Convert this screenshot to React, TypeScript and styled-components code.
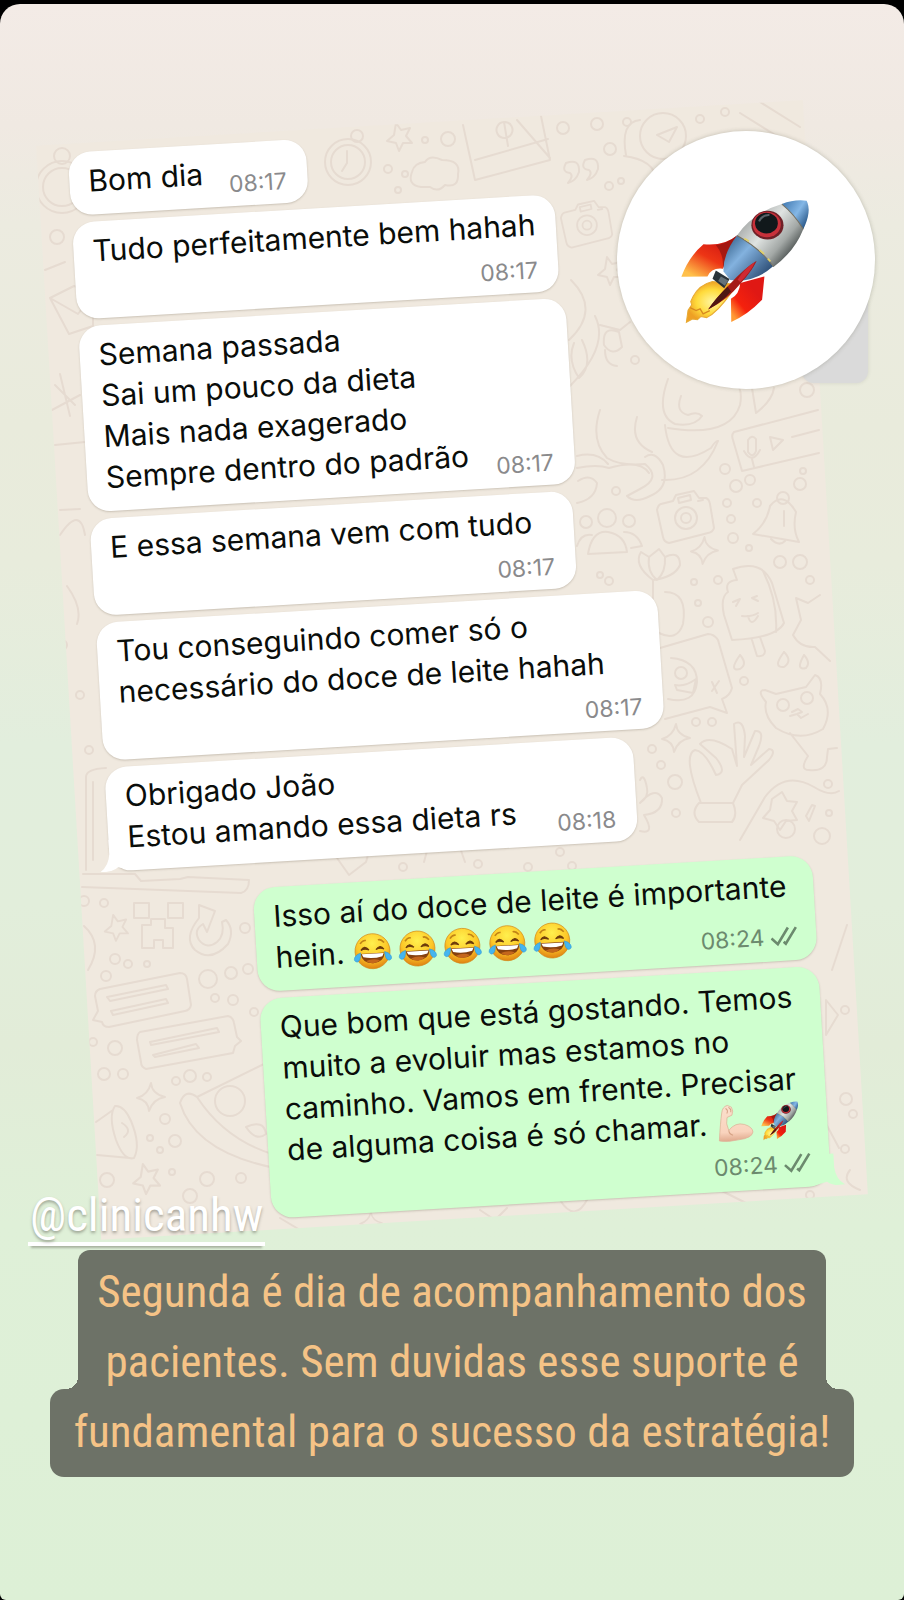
import React from "react";
import styled, { createGlobalStyle } from "styled-components";

const GlobalStyle = createGlobalStyle`
  *, *::before, *::after { box-sizing: border-box; }
  body { margin: 0; background: #000; }
`;

const Story = styled.main`
  position: relative;
  display: flex;
  flex-direction: column;
  align-items: center;
  min-height: calc(100vh - 4px);
  margin-top: 4px;
  padding: 118px 0 120px;
  overflow: hidden;
  border-radius: 20px 20px 6px 6px;
  background: linear-gradient(
    #f3ebe6 0px, #f0e9e2 120px, #ecebe0 220px, #e9ebdc 420px,
    #e8ecdc 560px, #e2eedd 740px, #e2eedb 900px, #e2ecd8 1040px,
    #dff0d8 1220px, #ddf0d6 1600px
  );
`;

const Chat = styled.section`
  position: relative;
  width: 85%;
  max-width: 768px;
  padding: 9px 36px 11px 31px;
  transform: rotate(-3.4deg);
  background: #f0e9df;
  overflow: hidden;
`;

const Wallpaper = styled.svg`
  position: absolute;
  inset: 0;
  width: 100%;
  height: 100%;
  fill: none;
  stroke: #e6dbd1;
  stroke-width: 2;
  stroke-linecap: round;
  stroke-linejoin: round;
`;

const Messages = styled.ol`
  position: relative;
  display: flex;
  flex-direction: column;
  gap: 7px;
  margin: 0;
  padding: 0;
  list-style: none;
`;

const Bubble = styled.li<{ $sent?: boolean; $width: number; $stacked?: boolean; $first?: boolean }>`
  position: relative;
  display: grid;
  width: ${(p) => p.$width}px;
  max-width: 100%;
  align-self: ${(p) => (p.$sent ? "flex-end" : "flex-start")};
  margin-top: ${(p) => (p.$first ? 18 : 0)}px;
  padding: 9px 20px 13px 19px;
  padding-right: ${(p) => (p.$sent ? 18 : 21)}px;
  border-radius: 22px;
  background: ${(p) => (p.$sent ? "#cfffcf" : "#fff")};
  box-shadow: 0 1px 2px rgba(90, 80, 60, 0.25);

  > p { padding-bottom: ${(p) => (p.$stacked ? 34 : 0)}px; }
  > p, > div { grid-area: 1 / 1; }
`;

const Text = styled.p`
  position: relative;
  margin: 0;
  color: #0a0d0a;
  font: 400 30px/41px Inter, "Liberation Sans", sans-serif;
  white-space: nowrap;
`;

const Meta = styled.div<{ $sent?: boolean }>`
  position: relative;
  display: flex;
  align-items: center;
  gap: 6px;
  align-self: end;
  justify-self: end;
  color: ${(p) => (p.$sent ? "#6c8a6e" : "#8a8a8c")};
  font: 400 23px/18px Inter, "Liberation Sans", sans-serif;
`;

const Tail = styled.svg<{ $sent?: boolean }>`
  position: absolute;
  bottom: 0;
  ${(p) => (p.$sent ? "right: -14px; transform: scaleX(-1);" : "left: -10px;")}
  width: 34px;
  height: 32px;
  fill: ${(p) => (p.$sent ? "#cfffcf" : "#fff")};
`;

const Emoji = styled.svg`
  display: inline-block;
  width: 40px;
  height: 40px;
  margin-right: 5px;
  vertical-align: -9px;
`;

const Avatar = styled.figure`
  position: absolute;
  top: 127px;
  right: 29px;
  display: grid;
  place-items: center;
  width: 258px;
  height: 258px;
  margin: 0;
  isolation: isolate;

  &::before {
    content: "";
    position: absolute;
    z-index: -2;
    right: 7px;
    bottom: 6px;
    width: 66px;
    height: 90px;
    border-radius: 12px;
    background: #dadada;
    box-shadow: 0 0 4px rgba(0, 0, 0, 0.1);
  }

  &::after {
    content: "";
    position: absolute;
    z-index: -1;
    inset: 0;
    border-radius: 50%;
    background: #fff;
    box-shadow: 0 0 4px rgba(80, 80, 60, 0.3);
  }
`;

const BigRocket = styled.svg`
  width: 134px;
  height: 129px;
`;

const Handle = styled.a`
  position: absolute;
  top: 1183px;
  left: 28px;
  padding: 0 2px;
  border-bottom: 4px solid #fff;
  color: #fff;
  font: 400 47px/55px "Roboto Condensed", "Liberation Sans Narrow", "Roboto", sans-serif;
  text-decoration: none;
  text-shadow: 0 2px 3px rgba(90, 90, 80, 0.5);
  box-shadow: 0 5px 2px -3px rgba(90, 90, 80, 0.4);
`;

const Caption = styled.p`
  display: flex;
  flex-direction: column;
  align-items: center;
  width: 89%;
  margin: 32px 0 0;
  color: #f5c386;
  font: 400 45px/70px "Roboto Condensed", "Liberation Sans Narrow", "Roboto", sans-serif;
  text-align: center;
`;

const CaptionTop = styled.span`
  position: relative;
  width: 93%;
  padding-top: 7px;
  border-radius: 12px 12px 0 0;
  background: #6d7267;
`;

const CaptionBottom = styled.span`
  width: 100%;
  margin-top: -8px;
  padding: 8px 0 10px;
  border-radius: 14px;
  background: #6d7267;
`;

const Line = styled.span`
  display: block;
  white-space: nowrap;
`;

const Fillet = styled.i<{ $side: "left" | "right" }>`
  position: absolute;
  bottom: 8px;
  ${(p) => p.$side}: -12px;
  width: 12px;
  height: 12px;
  background: radial-gradient(circle at ${(p) => (p.$side === "left" ? "0 0" : "100% 0")}, transparent 12px, #6d7267 12px);
`;

function Defs() {
  return (
    <svg width="0" height="0" style={{ position: "absolute" }} aria-hidden="true">
      <defs>
        <linearGradient id="body" x1="430" y1="340" x2="560" y2="450" gradientUnits="userSpaceOnUse">
          <stop offset="0" stopColor="#a8abaa" /><stop offset=".4" stopColor="#dfe3e1" /><stop offset=".75" stopColor="#a3a8a6" /><stop offset="1" stopColor="#4d5352" />
        </linearGradient>
        <linearGradient id="blue" x1="380" y1="410" x2="490" y2="510" gradientUnits="userSpaceOnUse">
          <stop offset="0" stopColor="#46729c" /><stop offset=".35" stopColor="#83b2df" /><stop offset="1" stopColor="#2b4c74" />
        </linearGradient>
        <linearGradient id="nose" x1="550" y1="290" x2="625" y2="340" gradientUnits="userSpaceOnUse">
          <stop offset="0" stopColor="#4c83b9" /><stop offset=".5" stopColor="#84b7e6" /><stop offset="1" stopColor="#255384" />
        </linearGradient>
        <linearGradient id="fin" x1="350" y1="400" x2="290" y2="510" gradientUnits="userSpaceOnUse">
          <stop offset="0" stopColor="#d51b12" /><stop offset=".45" stopColor="#ed3515" /><stop offset="1" stopColor="#ffc04a" />
        </linearGradient>
        <linearGradient id="fin2" x1="470" y1="560" x2="395" y2="620" gradientUnits="userSpaceOnUse">
          <stop offset="0" stopColor="#e01814" /><stop offset=".6" stopColor="#f5210d" /><stop offset="1" stopColor="#ff9b35" />
        </linearGradient>
        <radialGradient id="flame"><stop offset="0" stopColor="#fff6a0" /><stop offset=".6" stopColor="#ffdb3c" /><stop offset="1" stopColor="#eea024" /></radialGradient>
        <radialGradient id="face" cx=".5" cy=".28" r=".75"><stop offset="0" stopColor="#fff04e" /><stop offset=".6" stopColor="#fdc727" /><stop offset="1" stopColor="#dc7a11" /></radialGradient>
        <linearGradient id="skin" x1="0" y1="0" x2="0" y2="1"><stop offset="0" stopColor="#fbe0cd" /><stop offset=".75" stopColor="#f9d3bd" /><stop offset="1" stopColor="#e0a98d" /></linearGradient>

        <symbol id="rocket" viewBox="235 265 400 385">
          <path d="M335 520 Q295 530 277 565 L270 580 273 590 262 606 257 642 L275 632 290 634 300 625 318 628 Q350 612 390 555 L410 530Z" fill="url(#flame)" stroke="#e8aa34" strokeWidth="3" />
          <path d="M268 598l18 9 12-5 9 15 20-10" fill="none" stroke="#d88920" strokeWidth="4" />
          <path d="M408 383 Q370 415 308 409 Q265 445 242 506 L320 505 Q332 478 366 482Z" fill="url(#fin)" />
          <path d="M408 383 Q375 410 345 411 Q370 440 366 482 L385 430Z" fill="#8e1410" opacity=".7" />
          <path d="M490 505 L483 575 Q440 620 391 641 L390 572 Q415 560 418 525Z" fill="url(#fin2)" />
          <path d="M408 383 Q365 440 368 490 L388 516 Q460 525 516 475 Q475 415 408 383Z" fill="url(#blue)" />
          <path d="M408 383 Q455 315 542 289 Q585 315 606 364 Q580 430 518 476 Q475 420 408 383Z" fill="url(#body)" />
          <path d="M542 289 Q580 274 616 279 Q632 310 606 364 Q580 320 542 289Z" fill="url(#nose)" />
          <path d="M408 383Q475 420 518 476M542 289Q580 320 606 364" fill="none" stroke="#746f60" strokeWidth="3" />
          <path d="M430 392l14 8M475 426l14 12M500 452l8 8" stroke="#e3d267" strokeWidth="5" />
          <ellipse cx="499" cy="352" rx="48" ry="43" fill="#6f2027" />
          <ellipse cx="497" cy="350" rx="42" ry="38" fill="#c8313b" />
          <ellipse cx="496" cy="346" rx="34" ry="31" fill="#11181b" />
          <path d="M474 341Q482 321 505 322" fill="none" stroke="#586269" strokeWidth="6" />
          <path d="M345 487 L386 513 L370 540 L335 512Z" fill="#29333a" /><path d="M360 505l22 12-10 16-20-14Z" fill="#65727a" />
          <path d="M467 458 Q430 480 385 530 Q345 570 322 604 Q380 575 420 525 Q455 485 467 458Z" fill="#a51a17" />
          <path d="M462 462Q430 480 410 515L418 522Q450 490 462 462Z" fill="#d02a32" />
          <path d="M380 535Q340 575 322 604Q365 580 390 550Z" fill="#4e1713" />
        </symbol>

        <symbol id="joy" viewBox="0 0 40 40">
          <circle cx="20" cy="20" r="17.5" fill="url(#face)" stroke="#d28a1b" strokeWidth=".7" />
          <path d="M8 22h24Q31 31.500 20 32Q9 31.500 8 22Z" fill="#85400f" />
          <path d="M9 22.500h22l-1.500 3Q20 28 10.500 25.500Z" fill="#fff" />
          <path d="M13 29.500Q20 26.500 27 29.500Q24 32 20 32Q15 32 13 29.500Z" fill="#c4661c" />
          <path d="M8.500 18.500Q12 13 16.500 18.500Q12 16.500 8.500 18.500ZM23.500 18.500Q28 13 31.500 18.500Q28 16.500 23.500 18.500Z" fill="#6d3b0b" stroke="#6d3b0b" strokeWidth="1.200" />
          <path d="M8 12Q11 8 14 9M26 9Q29 8 32 12" fill="none" stroke="#c08316" strokeWidth="1.600" />
          <path d="M8 21Q8 29 4 30Q0 29 2 25Q4 22 8 21ZM32 21Q32 29 36 30Q40 29 38 25Q36 22 32 21Z" fill="#45b5ef" stroke="#2c93d6" strokeWidth=".5" />
        </symbol>

        <symbol id="arm" viewBox="0 0 40 40">
          <path d="M3 37Q5 19 7 9Q8 3 13 2L17 4Q19 8 17 12L12 14Q10 20 13 27Q20 19 29 22Q37 25 37 30Q36 36 22 37Q12 39 3 37Z" fill="url(#skin)" stroke="#dfb49b" strokeWidth=".8" />
          <path d="M11 5q3 2 1 5M14 4q3 2 2 5M13 27q0 4 4 5" fill="none" stroke="#d5a184" strokeWidth="1" />
        </symbol>

        <symbol id="star" viewBox="-14 -14 28 28" overflow="visible"><path d="M-2-12l5 7 9-2-4 8 6 7-9 0-4 8-3-8-9-2 7-6Z" /></symbol>
        <symbol id="spark" viewBox="-14 -14 28 28" overflow="visible"><path d="M0-14Q1-3 14 0Q2 2-2 14Q-3 3-14 1Q-3-2 0-14Z" /></symbol>
        <symbol id="camera" viewBox="0 0 60 60" overflow="visible"><path d="M5 14L17 11 20 5 38 1 43 8 50 8Q53 9 54 14L58 38Q57 42 52 43L13 53Q8 52 7 47L1 20Q2 15 5 14Z" /><circle cx="30" cy="28" r="11" /><circle cx="30" cy="28" r="5" /><path d="M22 8l12-3 1 5-12 3ZM42 11l5-1" /></symbol>
        <symbol id="note" viewBox="0 0 100 60" overflow="visible"><path d="M8 16L88 0Q94 0 95 6L99 32Q98 37 93 38L17 54Q11 54 10 49L1 47 6 38 3 23Q3 18 8 16ZM15 24L74 12 76 16 18 28ZM19 38L74 26 76 30 21 42Z" /></symbol>
      </defs>
    </svg>
  );
}

const dots: [number, number, number][] = [
  [563, 128, 6], [597, 124, 6], [610, 149, 6], [627, 122, 4], [700, 119, 4], [725, 112, 4], [448, 139, 7], [425, 140, 3], [398, 190, 3], [405, 174, 3], [388, 169, 4],
  [609, 186, 4], [621, 181, 3], [750, 480, 5], [757, 503, 4], [725, 469, 5], [736, 486, 6], [800, 484, 6], [803, 471, 3], [727, 503, 4], [731, 519, 4], [733, 538, 5], [749, 548, 3],
  [616, 491, 4], [600, 575, 3], [609, 581, 4], [780, 562, 6], [800, 562, 7], [810, 580, 4], [718, 580, 4], [694, 582, 3], [698, 603, 3], [708, 622, 5], [744, 681, 4], [696, 722, 4], [712, 722, 4],
  [652, 749, 4], [661, 765, 4], [675, 782, 7], [676, 813, 4], [828, 784, 4], [786, 829, 9], [822, 836, 8], [829, 813, 3],
  [104, 903, 4], [84, 901, 5], [115, 959, 5], [128, 964, 4], [147, 964, 3], [106, 976, 5], [208, 979, 9], [231, 973, 6], [248, 969, 5], [245, 928, 5], [215, 998, 4], [233, 1000, 5], [254, 1012, 4],
  [93, 1042, 4], [115, 1048, 7], [104, 1074, 6], [123, 1074, 5], [190, 1076, 6], [176, 1081, 4], [207, 1077, 4], [165, 1119, 5], [175, 1141, 6], [150, 1138, 3], [160, 1150, 3],
  [107, 1180, 7], [207, 1179, 7], [172, 1172, 3], [241, 1178, 5], [190, 1196, 7], [846, 1099, 6], [853, 1114, 4], [845, 1149, 4], [810, 1195, 4], [845, 1010, 4], [57, 237, 7], [62, 645, 5], [89, 750, 4], [80, 695, 4],
  [403, 867, 4], [478, 864, 4], [560, 852, 4], [572, 866, 4], [528, 867, 4], [807, 390, 7], [635, 360, 4],
];

function Doodles() {
  return (
    <Wallpaper viewBox="0 0 776 1096" preserveAspectRatio="xMidYMin slice" aria-hidden="true">
      <g transform="translate(388 548) rotate(3.4) translate(-452 -670)">
        {dots.map(([x, y, r]) => <circle key={`${x}-${y}`} cx={x} cy={y} r={r} />)}
        <use href="#star" x="384" y="121" width="28" height="28" />
        <use href="#star" x="102" y="913" width="26" height="26" />
        <use href="#star" x="130" y="1162" width="30" height="30" />
        <use href="#star" x="595" y="255" width="28" height="28" />
        <use href="#spark" x="691" y="537" width="27" height="27" />
        <use href="#spark" x="662" y="724" width="28" height="28" />
        <use href="#spark" x="137" y="1083" width="28" height="28" />
        <use href="#spark" x="360" y="1212" width="22" height="22" />
        <use href="#camera" x="656" y="490" width="60" height="60" />
        <use href="#camera" x="560" y="200" width="54" height="54" />
        <use href="#note" x="92" y="973" width="100" height="60" />
        <path d="M140 1032L228 1016Q233 1017 234 1023L237 1037 241 1041 235 1046 233 1053 146 1069Q141 1067 141 1062L137 1040Q137 1034 140 1032ZM150 1042L217 1028 219 1032 151 1045ZM153 1055L196 1044 199 1048 155 1057Z" />
        <circle cx="348" cy="162" r="23" /><circle cx="348" cy="162" r="17" /><circle cx="357" cy="136" r="6" /><path d="M347 151v12l-5 8" />
        <circle cx="62" cy="187" r="26" /><circle cx="62" cy="187" r="19" /><circle cx="62" cy="156" r="8" />
        <path d="M421 187Q407 185 412 172Q414 163 425 162Q430 154 442 160Q461 160 458 174Q459 188 445 185Q438 193 430 187Z" />
        <path d="M463 125L475 180 550 160 541 116M475 160L548 139M517 120L550 158M505 122a8 8 0 1 1-1 0l4 24" />
        <path d="M566 163q14-5 13 9q-3 9-11 11q6-7 2-10q-9-1-4-10M585 160q14-5 13 9q-3 9-11 11q6-7 2-10q-9-1-4-10" />
        <circle cx="663" cy="136" r="23" /><path d="M626 155Q620 122 640 120M624 156Q655 160 656 180M657 135l20-8-8 15ZM740 113l40 25M760 102l40 25" />
        <path d="M50 298l24-12 19 6v34l-24 8ZM50 298l28 16 15-20M45 270l20-8M55 385l20 20M52 410l28-15M60 374l10 42M55 445l30-3M60 510l20-1M60 535q20-30 25 0M67 586q16 22 10 38" />
        <path d="M571 280q30 30-2 60M570 386q40-40 25-70M582 340q12 25-3 38q-12-18-5-35M600 410Q590 440 607 458Q620 466 645 464Q662 478 640 489L627 496Q635 504 650 496Q670 488 663 465Q655 450 645 457M577 456q20-5 31 8M577 468q20-4 32 0Q640 459 649 473M578 481q12-8 19 2q-1 16-20 20M637 417q-8 25 15 35M665 425Q670 474 711 448Q716 440 718 441Q702 482 662 480M668 379Q655 415 675 424Q695 427 702 416Q697 411 688 415Q675 412 681 396M668 428Q730 438 740 405Q746 375 711 374M752 388l4 25q16-12 18-25M600 325l20 5 10-8M604 345q-2-20 15-13l3 15q-10 10-18-2M605 350q0 15 12 16" />
        <path d="M818 410L734 432Q731 435 733 440L742 471 819 453M748 440v12q5 7 8-1v-12q-4-5-8 1M744 451q8 14 16-1M752 459l2 8M770 437l3 13 10-10ZM792 437l27-7" />
        <circle cx="607" cy="518" r="9" /><path d="M588 554Q592 530 608 532Q625 535 627 552Z" /><circle cx="586" cy="522" r="6" /><circle cx="629" cy="521" r="6" /><path d="M577 546q4-13 15-11M624 532q13 0 18 14l-11 2" />
        <path d="M753 534Q767 523 770 506Q783 490 796 512Q792 529 799 542ZM784 511v15M771 539q8 8 14 2" /><circle cx="783" cy="498" r="6" />
        <path d="M653 580Q633 565 641 552L649 557 659 549 665 557Q680 550 680 565Q675 577 653 580V618M665 592q23 0 18 32q-6 18-24 9M649 557q-2 15 8 23M665 557q1 15-8 23" />
        <path d="M733 569Q762 559 772 583L784 623Q777 638 732 640L724 615Q720 597 728 592Q724 581 737 580ZM763 571q15 30 13 61M752 640l5 16q8 1 8-5l-5-14M733 602l7-3-4 7M757 596l-5 2 6 3M742 616q10 1 16-3M748 616q3 12 10 0" />
        <path d="M820 595L808 603 796 598 801 620 793 635Q800 648 815 647L830 661M740 655q-12 17 0 14q8-5 0-14M784 652q-12 16 0 15q9-6 0-15M804 655q-9 16 2 13q5-5-2-13" />
        <path d="M660 648L708 634Q714 634 718 640L732 688Q730 696 722 699L727 713 710 707 665 719M671 658q26 2 26 24q-2 23-29 17M675 685q10 2 21-6l-3 14-16-3ZM712 682l5 11M719 681l-7 10" /><circle cx="681" cy="673" r="6" />
        <path d="M766 702Q756 690 765 690L776 694 806 687 815 675Q824 678 820 694Q834 709 823 729Q800 743 776 728Q763 715 766 702ZM790 733l18 23q-9 14 1 14q18 2 18-13l1-8 9-1" /><circle cx="783" cy="705" r="6" /><circle cx="807" cy="698" r="6" /><path d="M792 712l6-3 4 3-5 2-7 2M797 714l4 4 7-4" />
        <path d="M701 803Q682 755 695 750Q705 751 716 775Q728 773 716 758L700 744Q709 734 732 749L737 766 734 724Q743 718 745 736L744 757 755 731Q765 730 759 746L751 765 769 749Q777 750 769 760L742 785 733 803M699 803h34q5 12-1 19H699q-9-9 0-19Z" />
        <path d="M740 840L765 797Q785 770 814 787Q830 797 839 791M772 799l10-7 5 9 10 1-5 9 5 9-11 1-6 9-6-9-11-3 7-8ZM806 816l6-11 3 1-6 15Z" />
        <path d="M640 780q4-8 7 8q2 9-7 15q15-17 22-5q1 15-18 17q12 20-4 16" />
        <path d="M86 870V777q0-8 20-9M93 860V782M83 874H135L141 881 180 879 188 877 249 880Q249 891 241 893L82 887" />
        <path d="M134 903h15v15h-15ZM168 903h15v15h-15ZM151 919h14v9h8v20h-10v-8h-9v8h-12v-23h9Z" />
        <path d="M199 918Q183 938 195 950Q211 963 228 944Q235 930 226 920L222 922Q225 935 217 942Q207 950 199 940Q193 930 203 924L207 932 215 911 199 905Z" />
        <path d="M84 926q20 18 4 44" /><path d="M115 1106Q108 1116 116 1140Q124 1161 134 1158Q141 1145 131 1121Q124 1105 115 1106ZM96 1122L113 1110M97 1155L130 1158M122 1123q11 7 2 14" />
        <path d="M268 1062L197 1097Q185 1088 180 1103Q195 1152 275 1168M197 1097Q225 1140 275 1155" /><circle cx="230" cy="1101" r="15" /><path d="M246 1127q18-8 20 7q-10 8-20-7" />
        <path d="M342 852q10-17 15 0q15-7 9 10l-17 13-12-17ZM424 862l4-15 30-5 7 20M826 1000l12 15-12 20ZM824 1120l15 28M847 925l-15 45M850 1170q-10 12 10 20M480 1210l15 10 12-12M280 1218l25 15M560 1200q15 24 28-2M720 1190l30 15" />
      </g>
    </Wallpaper>
  );
}

function Ticks() {
  return (
    <svg width="28" height="22" viewBox="0 0 28 22" fill="none" stroke="currentColor" strokeWidth="2.600" role="img" aria-label="Entregue">
      <path d="M1 12l6 6L18 2M13 16l2 2L26 2" />
    </svg>
  );
}

type Message = { id: number; lines: React.ReactNode[]; time: string; width: number; stacked?: boolean; sent?: boolean; first?: boolean; tail?: boolean };

const Joy = () => <Emoji role="img" aria-label="😂"><use href="#joy" /></Emoji>;

const messages: Message[] = [
  { id: 1, lines: ["Bom dia"], time: "08:17", width: 238 },
  { id: 2, lines: ["Tudo perfeitamente bem hahah"], time: "08:17", width: 483, stacked: true },
  { id: 3, lines: ["Semana passada", "Sai um pouco da dieta", "Mais nada exagerado", "Sempre dentro do padrão"], time: "08:17", width: 488 },
  { id: 4, lines: ["E essa semana vem com tudo"], time: "08:17", width: 483, stacked: true },
  { id: 5, lines: ["Tou conseguindo comer só o", "necessário do doce de leite hahah"], time: "08:17", width: 562, stacked: true },
  { id: 6, lines: ["Obrigado João", "Estou amando essa dieta rs"], time: "08:18", width: 529, tail: true },
  { id: 7, lines: ["Isso aí do doce de leite é importante", <>hein. <Joy /><Joy /><Joy /><Joy /><Joy /></>], time: "08:24", width: 560, sent: true, first: true },
  {
    id: 8,
    lines: ["Que bom que está gostando. Temos", "muito a evoluir mas estamos no", "caminho. Vamos em frente. Precisar",
      <>de alguma coisa é só chamar. <Emoji role="img" aria-label="💪🏻"><use href="#arm" /></Emoji><Emoji role="img" aria-label="🚀"><use href="#rocket" /></Emoji></>],
    time: "08:24", width: 560, sent: true, stacked: true, tail: true,
  },
];

export default function App() {
  return (
    <>
      <GlobalStyle />
      <Defs />
      <Story>
        <Chat>
          <Doodles />
          <Messages>
            {messages.map((m) => (
              <Bubble key={m.id} $sent={m.sent} $width={m.width} $stacked={m.stacked} $first={m.first}>
                {m.tail && <Tail $sent={m.sent} viewBox="0 0 34 32" aria-hidden="true"><path d="M10 0V14Q9 26 0 32Q12 33 18 28L34 32V0Z" /></Tail>}
                <Text>{m.lines.map((l, i) => <Line key={i}>{l}</Line>)}</Text>
                <Meta $sent={m.sent}><time>{m.time}</time>{m.sent && <Ticks />}</Meta>
              </Bubble>
            ))}
          </Messages>
        </Chat>
        <Avatar>
          <BigRocket role="img" aria-label="🚀"><use href="#rocket" /></BigRocket>
        </Avatar>
        <Handle href="#clinicanhw">@clinicanhw</Handle>
        <Caption>
          <CaptionTop>
            <Line>Segunda é dia de acompanhamento dos</Line>
            <Line>pacientes. Sem duvidas esse suporte é</Line>
            <Fillet $side="left" /><Fillet $side="right" />
          </CaptionTop>
          <CaptionBottom>
            <Line>fundamental para o sucesso da estratégia!</Line>
          </CaptionBottom>
        </Caption>
      </Story>
    </>
  );
}
